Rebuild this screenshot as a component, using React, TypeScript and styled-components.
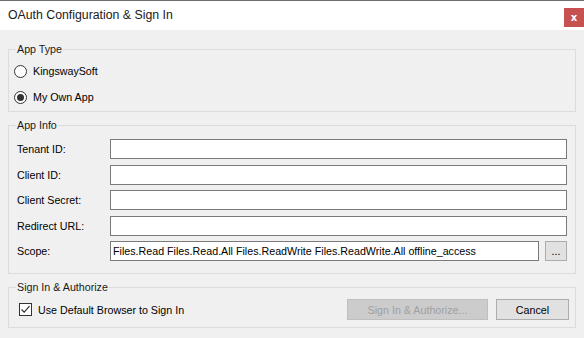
import { Fragment } from "react";
import styled, { createGlobalStyle } from "styled-components";

const FONT = `"Liberation Sans", Arial, sans-serif`;

const GlobalStyle = createGlobalStyle`
  html, body {
    margin: 0;
    padding: 0;
    background: #f0f0f0;
  }
  * {
    box-sizing: border-box;
  }
`;

const Window = styled.div`
  width: 584px;
  height: 338px;
  background: #f0f0f0;
  border-top: 1px solid #6e6e6e;
  font-family: ${FONT};
  font-size: 10.7px;
  color: #000;
  display: flex;
  flex-direction: column;
  overflow: hidden;
`;

const TitleBar = styled.div`
  height: 29px;
  background: #fff;
  display: flex;
  align-items: flex-start;
  justify-content: space-between;
  padding-left: 8px;
`;

const Title = styled.span`
  font-size: 12.3px;
  line-height: 29px;
  color: #1a1a1a;
`;

const CloseButton = styled.div`
  width: 20px;
  height: 19px;
  margin-top: 7px;
  background: #c75050;
  color: #fff;
  font-family: "DejaVu Sans", sans-serif;
  font-weight: bold;
  font-size: 10px;
  display: flex;
  align-items: center;
  justify-content: center;
  padding-bottom: 1px;
`;

const Body = styled.div`
  padding: 12px 8px 0 8px;
  display: flex;
  flex-direction: column;
  gap: 6px;
`;

const Group = styled.fieldset<{ $pt: number; $pb: number; $pr?: number }>`
  margin: 0;
  border: 1px solid #dcdcdc;
  padding: ${(p) => p.$pt}px ${(p) => p.$pr ?? 8}px ${(p) => p.$pb}px 8px;
  min-width: 0;
`;

const Caption = styled.legend`
  padding: 0 1px;
  margin-left: -1px;
  line-height: 14px;
  color: #1a1a1a;
`;

const RadioRow = styled.label`
  height: 26px;
  display: flex;
  align-items: center;
  gap: 6px;
  margin-left: -3px;
`;

const RadioCircle = styled.span<{ $checked?: boolean }>`
  width: 13px;
  height: 13px;
  border-radius: 50%;
  border: 1px solid #333;
  background: #fff;
  display: flex;
  align-items: center;
  justify-content: center;
  &::after {
    content: "";
    width: 7px;
    height: 7px;
    border-radius: 50%;
    background: ${(p) => (p.$checked ? "#333" : "transparent")};
  }
`;

const FieldGrid = styled.div`
  display: grid;
  grid-template-columns: 93px minmax(0, 1fr);
  row-gap: 5.5px;
  align-items: center;
`;

const FieldLabel = styled.span`
  line-height: 20px;
`;

const InputRow = styled.div`
  display: flex;
  gap: 6px;
  min-width: 0;
`;

const TextBox = styled.div`
  flex: 1;
  min-width: 0;
  height: 20px;
  border: 1px solid #7a7a7a;
  background: #fff;
  padding-left: 2px;
  line-height: 18px;
  white-space: nowrap;
  overflow: hidden;
`;

const Button = styled.div<{ $width: number; $height?: number; $disabled?: boolean }>`
  width: ${(p) => p.$width}px;
  height: ${(p) => p.$height ?? 21}px;
  border: 1px solid ${(p) => (p.$disabled ? "#bfbfbf" : "#adadad")};
  background: ${(p) => (p.$disabled ? "#cccccc" : "#e1e1e1")};
  color: ${(p) => (p.$disabled ? "#a0a0a0" : "#000")};
  display: flex;
  align-items: center;
  justify-content: center;
  flex-shrink: 0;
`;

const SignRow = styled.div`
  display: flex;
  align-items: center;
  height: 21px;
`;

const CheckLabel = styled.label`
  display: flex;
  align-items: center;
  gap: 6px;
  margin-left: 2px;
  flex: 1;
`;

const CheckBox = styled.span`
  width: 13px;
  height: 13px;
  border: 1px solid #333;
  background: #fff;
  display: flex;
  align-items: center;
  justify-content: center;
`;

const Buttons = styled.div`
  display: flex;
  gap: 8px;
`;

const SCOPE =
  "Files.Read Files.Read.All Files.ReadWrite Files.ReadWrite.All offline_access";

const fields = ["Tenant ID:", "Client ID:", "Client Secret:", "Redirect URL:"];

export default function App() {
  return (
    <>
      <GlobalStyle />
      <Window>
        <TitleBar>
          <Title>OAuth Configuration &amp; Sign In</Title>
          <CloseButton>x</CloseButton>
        </TitleBar>
        <Body>
          <Group $pt={2} $pb={1}>
            <Caption>App Type</Caption>
            <RadioRow>
              <RadioCircle />
              KingswaySoft
            </RadioRow>
            <RadioRow>
              <RadioCircle $checked />
              My Own App
            </RadioRow>
          </Group>

          <Group $pt={7} $pb={12}>
            <Caption>App Info</Caption>
            <FieldGrid>
              {fields.map((f) => (
                <Fragment key={f}>
                  <FieldLabel>{f}</FieldLabel>
                  <TextBox />
                </Fragment>
              ))}
              <FieldLabel>Scope:</FieldLabel>
              <InputRow>
                <TextBox>{SCOPE}</TextBox>
                <Button $width={22} $height={20}>
                  ...
                </Button>
              </InputRow>
            </FieldGrid>
          </Group>

          <Group $pt={5} $pb={7} $pr={6}>
            <Caption>Sign In &amp; Authorize</Caption>
            <SignRow>
              <CheckLabel>
                <CheckBox>
                  <svg width="11" height="11" viewBox="0 0 11 11">
                    <path d="M1.5 5.5 L4.2 8.2 L9.5 2.2" fill="none" stroke="#333" strokeWidth="1.2" />
                  </svg>
                </CheckBox>
                Use Default Browser to Sign In
              </CheckLabel>
              <Buttons>
                <Button $width={141} $disabled>
                  Sign In &amp; Authorize...
                </Button>
                <Button $width={73}>Cancel</Button>
              </Buttons>
            </SignRow>
          </Group>
        </Body>
      </Window>
    </>
  );
}
